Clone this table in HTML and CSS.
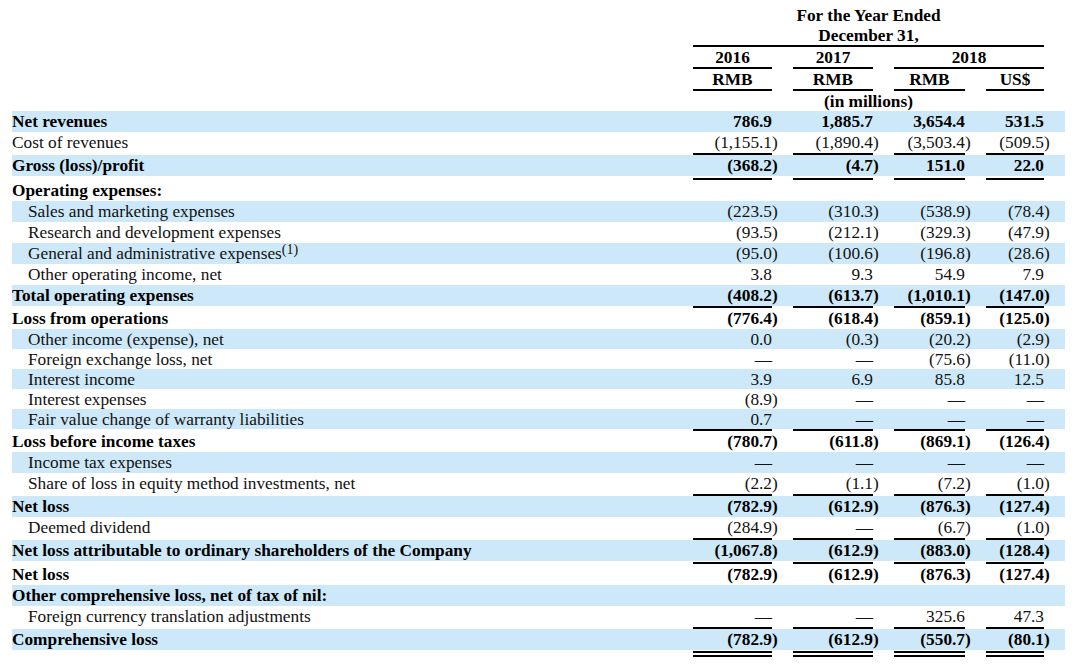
FILE: index.html
```html
<!DOCTYPE html>
<html lang="en">
<head>
<meta charset="utf-8">
<title>Consolidated Statements of Operations</title>
<link rel="stylesheet" href="styles.css">
</head>
<body>
<div class="stmt">
  <div class="grid hrow"><div class="all">For the Year Ended</div></div>
  <div class="grid hrow"><div class="all ul">December 31,</div></div>
  <div class="grid hrow"><div class="c1 ul">2016</div><div class="c2 ul">2017</div><div class="c34 ul">2018</div></div>
  <div class="grid hrow"><div class="c1 ul">RMB</div><div class="c2 ul">RMB</div><div class="c3 ul">RMB</div><div class="c4 ul">US$</div></div>
  <div class="grid hrow low"><div class="all">(in millions)</div></div>

  <div class="grid row shade b"><div class="lbl">Net revenues</div><div class="v">786.9</div><div class="v">1,885.7</div><div class="v">3,654.4</div><div class="v">531.5</div></div>
  <div class="grid row rb"><div class="lbl">Cost of revenues</div><div class="v">(1,155.1<span class="cp">)</span></div><div class="v">(1,890.4<span class="cp">)</span></div><div class="v">(3,503.4<span class="cp">)</span></div><div class="v">(509.5<span class="cp">)</span></div></div>
  <div class="grid row shade b"><div class="lbl">Gross (loss)/profit</div><div class="v">(368.2<span class="cp">)</span></div><div class="v">(4.7<span class="cp">)</span></div><div class="v">151.0</div><div class="v">22.0</div></div>
  <div class="grid row b rt gap2"><div class="lbl">Operating expenses:</div><div class="v"></div><div class="v"></div><div class="v"></div><div class="v"></div></div>
  <div class="grid row shade"><div class="lbl ind">Sales and marketing expenses</div><div class="v">(223.5<span class="cp">)</span></div><div class="v">(310.3<span class="cp">)</span></div><div class="v">(538.9<span class="cp">)</span></div><div class="v">(78.4<span class="cp">)</span></div></div>
  <div class="grid row"><div class="lbl ind">Research and development expenses</div><div class="v">(93.5<span class="cp">)</span></div><div class="v">(212.1<span class="cp">)</span></div><div class="v">(329.3<span class="cp">)</span></div><div class="v">(47.9<span class="cp">)</span></div></div>
  <div class="grid row shade"><div class="lbl ind">General and administrative expenses<sup class="fn">(1)</sup></div><div class="v">(95.0<span class="cp">)</span></div><div class="v">(100.6<span class="cp">)</span></div><div class="v">(196.8<span class="cp">)</span></div><div class="v">(28.6<span class="cp">)</span></div></div>
  <div class="grid row"><div class="lbl ind">Other operating income, net</div><div class="v">3.8</div><div class="v">9.3</div><div class="v">54.9</div><div class="v">7.9</div></div>
  <div class="grid row shade b"><div class="lbl">Total operating expenses</div><div class="v">(408.2<span class="cp">)</span></div><div class="v">(613.7<span class="cp">)</span></div><div class="v">(1,010.1<span class="cp">)</span></div><div class="v">(147.0<span class="cp">)</span></div></div>
  <div class="grid row b rt"><div class="lbl">Loss from operations</div><div class="v">(776.4<span class="cp">)</span></div><div class="v">(618.4<span class="cp">)</span></div><div class="v">(859.1<span class="cp">)</span></div><div class="v">(125.0<span class="cp">)</span></div></div>
  <div class="grid row tight shade"><div class="lbl ind">Other income (expense), net</div><div class="v">0.0</div><div class="v">(0.3<span class="cp">)</span></div><div class="v">(20.2<span class="cp">)</span></div><div class="v">(2.9<span class="cp">)</span></div></div>
  <div class="grid row tight"><div class="lbl ind">Foreign exchange loss, net</div><div class="v">—</div><div class="v">—</div><div class="v">(75.6<span class="cp">)</span></div><div class="v">(11.0<span class="cp">)</span></div></div>
  <div class="grid row tight shade"><div class="lbl ind">Interest income</div><div class="v">3.9</div><div class="v">6.9</div><div class="v">85.8</div><div class="v">12.5</div></div>
  <div class="grid row tight"><div class="lbl ind">Interest expenses</div><div class="v">(8.9<span class="cp">)</span></div><div class="v">—</div><div class="v">—</div><div class="v">—</div></div>
  <div class="grid row tight shade"><div class="lbl ind">Fair value change of warranty liabilities</div><div class="v">0.7</div><div class="v">—</div><div class="v">—</div><div class="v">—</div></div>
  <div class="grid row b rt"><div class="lbl">Loss before income taxes</div><div class="v">(780.7<span class="cp">)</span></div><div class="v">(611.8<span class="cp">)</span></div><div class="v">(869.1<span class="cp">)</span></div><div class="v">(126.4<span class="cp">)</span></div></div>
  <div class="grid row shade"><div class="lbl ind">Income tax expenses</div><div class="v">—</div><div class="v">—</div><div class="v">—</div><div class="v">—</div></div>
  <div class="grid row rb"><div class="lbl ind">Share of loss in equity method investments, net</div><div class="v">(2.2<span class="cp">)</span></div><div class="v">(1.1<span class="cp">)</span></div><div class="v">(7.2<span class="cp">)</span></div><div class="v">(1.0<span class="cp">)</span></div></div>
  <div class="grid row shade b"><div class="lbl">Net loss</div><div class="v">(782.9<span class="cp">)</span></div><div class="v">(612.9<span class="cp">)</span></div><div class="v">(876.3<span class="cp">)</span></div><div class="v">(127.4<span class="cp">)</span></div></div>
  <div class="grid row rb"><div class="lbl ind">Deemed dividend</div><div class="v">(284.9<span class="cp">)</span></div><div class="v">—</div><div class="v">(6.7<span class="cp">)</span></div><div class="v">(1.0<span class="cp">)</span></div></div>
  <div class="grid row shade b"><div class="lbl">Net loss attributable to ordinary shareholders of the Company</div><div class="v">(1,067.8<span class="cp">)</span></div><div class="v">(612.9<span class="cp">)</span></div><div class="v">(883.0<span class="cp">)</span></div><div class="v">(128.4<span class="cp">)</span></div></div>
  <div class="grid row b rt gap1"><div class="lbl">Net loss</div><div class="v">(782.9<span class="cp">)</span></div><div class="v">(612.9<span class="cp">)</span></div><div class="v">(876.3<span class="cp">)</span></div><div class="v">(127.4<span class="cp">)</span></div></div>
  <div class="grid row shade b"><div class="lbl">Other comprehensive loss, net of tax of nil:</div><div class="v"></div><div class="v"></div><div class="v"></div><div class="v"></div></div>
  <div class="grid row rb"><div class="lbl ind">Foreign currency translation adjustments</div><div class="v">—</div><div class="v">—</div><div class="v">325.6</div><div class="v">47.3</div></div>
  <div class="grid row shade b"><div class="lbl">Comprehensive loss</div><div class="v">(782.9<span class="cp">)</span></div><div class="v">(612.9<span class="cp">)</span></div><div class="v">(550.7<span class="cp">)</span></div><div class="v">(80.1<span class="cp">)</span></div></div>
  <div class="grid foot"><div></div><div class="dbl"></div><div class="dbl"></div><div class="dbl"></div><div class="dbl"></div></div>
</div>
</body>
</html>
```

FILE: styles.css
```css
html, body {
  margin: 0;
  padding: 0;
  background: #ffffff;
}

body {
  font-family: "Liberation Serif", "Times New Roman", serif;
  font-size: 17.3px;
  color: #111111;
}

.stmt {
  margin-left: 12px;
  width: 1053px;
  padding-top: 5px;
}

.grid {
  display: grid;
  grid-template-columns: 660px 79px 80px 71px 58px;
  column-gap: 21px;
  padding-right: 21px;
}

/* header */
.hrow {
  line-height: 19px;
  font-weight: bold;
  text-align: center;
  color: #000;
}
.hrow > div { padding-top: 1px; }
.hrow.low { line-height: 18px; }
.hrow.low > div { padding-top: 2px; }
.hrow .all { grid-column: 2 / 6; }
.hrow .c1 { grid-column: 2; }
.hrow .c2 { grid-column: 3; }
.hrow .c3 { grid-column: 4; }
.hrow .c4 { grid-column: 5; }
.hrow .c34 { grid-column: 4 / 6; }
.ul { border-bottom: 2px solid #000; }

/* body rows */
.row { line-height: 20px; }
.row.tight { line-height: 19px; }
.row .lbl,
.row .v { padding-top: 1px; }
.shade { background: #cde9f9; }
.b { font-weight: bold; color: #000; }
.gap2 { margin-top: 2px; }
.gap1 { margin-top: 1px; }

.lbl { white-space: nowrap; }
.ind { padding-left: 16px; }

.v {
  text-align: right;
  white-space: nowrap;
}
.cp {
  display: inline-block;
  width: 0;
}

.fn {
  font-size: 14px;
  line-height: 0;
  vertical-align: 5px;
}

.rt .v { border-top: 2px solid #000; }
.rt .lbl { padding-top: 3px; }
.rb .v { border-bottom: 2px solid #000; }
.rb .lbl { padding-bottom: 2px; }

.foot { margin-top: 1px; }
.foot .dbl {
  height: 0;
  border-top: 6px double #000;
}
```
